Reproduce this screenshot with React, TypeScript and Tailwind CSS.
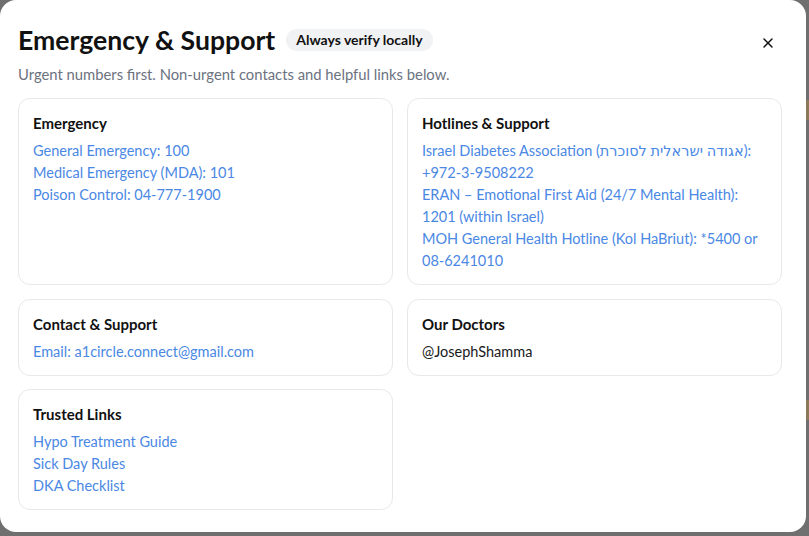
import React from "react";
import { X } from "lucide-react";

type Section = {
  title: string;
  items: string[];
  plain?: boolean;
};

const sections: Section[] = [
  {
    title: "Emergency",
    items: [
      "General Emergency: 100",
      "Medical Emergency (MDA): 101",
      "Poison Control: 04-777-1900",
    ],
  },
  {
    title: "Hotlines & Support",
    items: [
      "Israel Diabetes Association (אגודה ישראלית לסוכרת): +972-3-9508222",
      "ERAN – Emotional First Aid (24/7 Mental Health): 1201 (within Israel)",
      "MOH General Health Hotline (Kol HaBriut): *5400 or 08-6241010",
    ],
  },
  {
    title: "Contact & Support",
    items: ["Email: a1circle.connect@gmail.com"],
  },
  {
    title: "Our Doctors",
    items: ["@JosephShamma"],
    plain: true,
  },
  {
    title: "Trusted Links",
    items: ["Hypo Treatment Guide", "Sick Day Rules", "DKA Checklist"],
  },
];

const Card: React.FC<{ section: Section }> = ({ section }) => (
  <div className="border border-[#e8e8ea] rounded-xl px-[14px] pt-[14px] pb-[12px] self-stretch">
    <h3 className="font-bold text-[15px] leading-5 text-[#111] mb-[7px]">
      {section.title}
    </h3>
    <div className="flex flex-col">
      {section.items.map((item, index) => (
        <a
          key={index}
          href="#"
          className={
            section.plain
              ? "text-[14.5px] leading-[22px] text-[#1a1a1a]"
              : "text-[14.5px] leading-[22px] text-[#4a88e4]"
          }
        >
          {item}
        </a>
      ))}
    </div>
  </div>
);

const App: React.FC = () => {
  return (
    <div
      className="w-[809px] h-[536px] bg-[#6f6f6f] overflow-hidden relative"
      style={{ fontFamily: 'Lato, "DejaVu Sans", sans-serif' }}
    >
      <div className="absolute left-[806px] top-[100px] w-[3px] h-[20px] bg-[#8a7a5a]" />
      <div className="absolute left-[806px] top-[400px] w-[3px] h-[20px] bg-[#8a7a5a]" />
      <div className="w-[806px] h-[532px] bg-white rounded-2xl pl-[18px] pr-[24px] pt-[24px]">
        <div className="flex items-center justify-between">
          <div className="flex items-center gap-[11px]">
            <h2 className="text-[26.6px] leading-8 font-bold text-[#111]">
              Emergency &amp; Support
            </h2>
            <span className="bg-[#f1f2f4] rounded-full px-[10px] py-[3px] text-[14px] leading-4 font-bold text-[#111]">
              Always verify locally
            </span>
          </div>
          <button className="mr-[6px] mt-[6px] text-[#111]">
            <X size={16} strokeWidth={2.2} />
          </button>
        </div>
        <p className="text-[14.8px] leading-5 text-[#6b7280] mt-[8px]">
          Urgent numbers first. Non-urgent contacts and helpful links below.
        </p>
        <div className="grid grid-cols-2 gap-x-[14px] gap-y-[13px] mt-[14px] items-start">
          <div className="col-span-2 grid grid-cols-2 gap-[14px] mb-[1px]">
            <Card section={sections[0]} />
            <Card section={sections[1]} />
          </div>
          <Card section={sections[2]} />
          <Card section={sections[3]} />
          <Card section={sections[4]} />
        </div>
      </div>
    </div>
  );
};

export default App;
